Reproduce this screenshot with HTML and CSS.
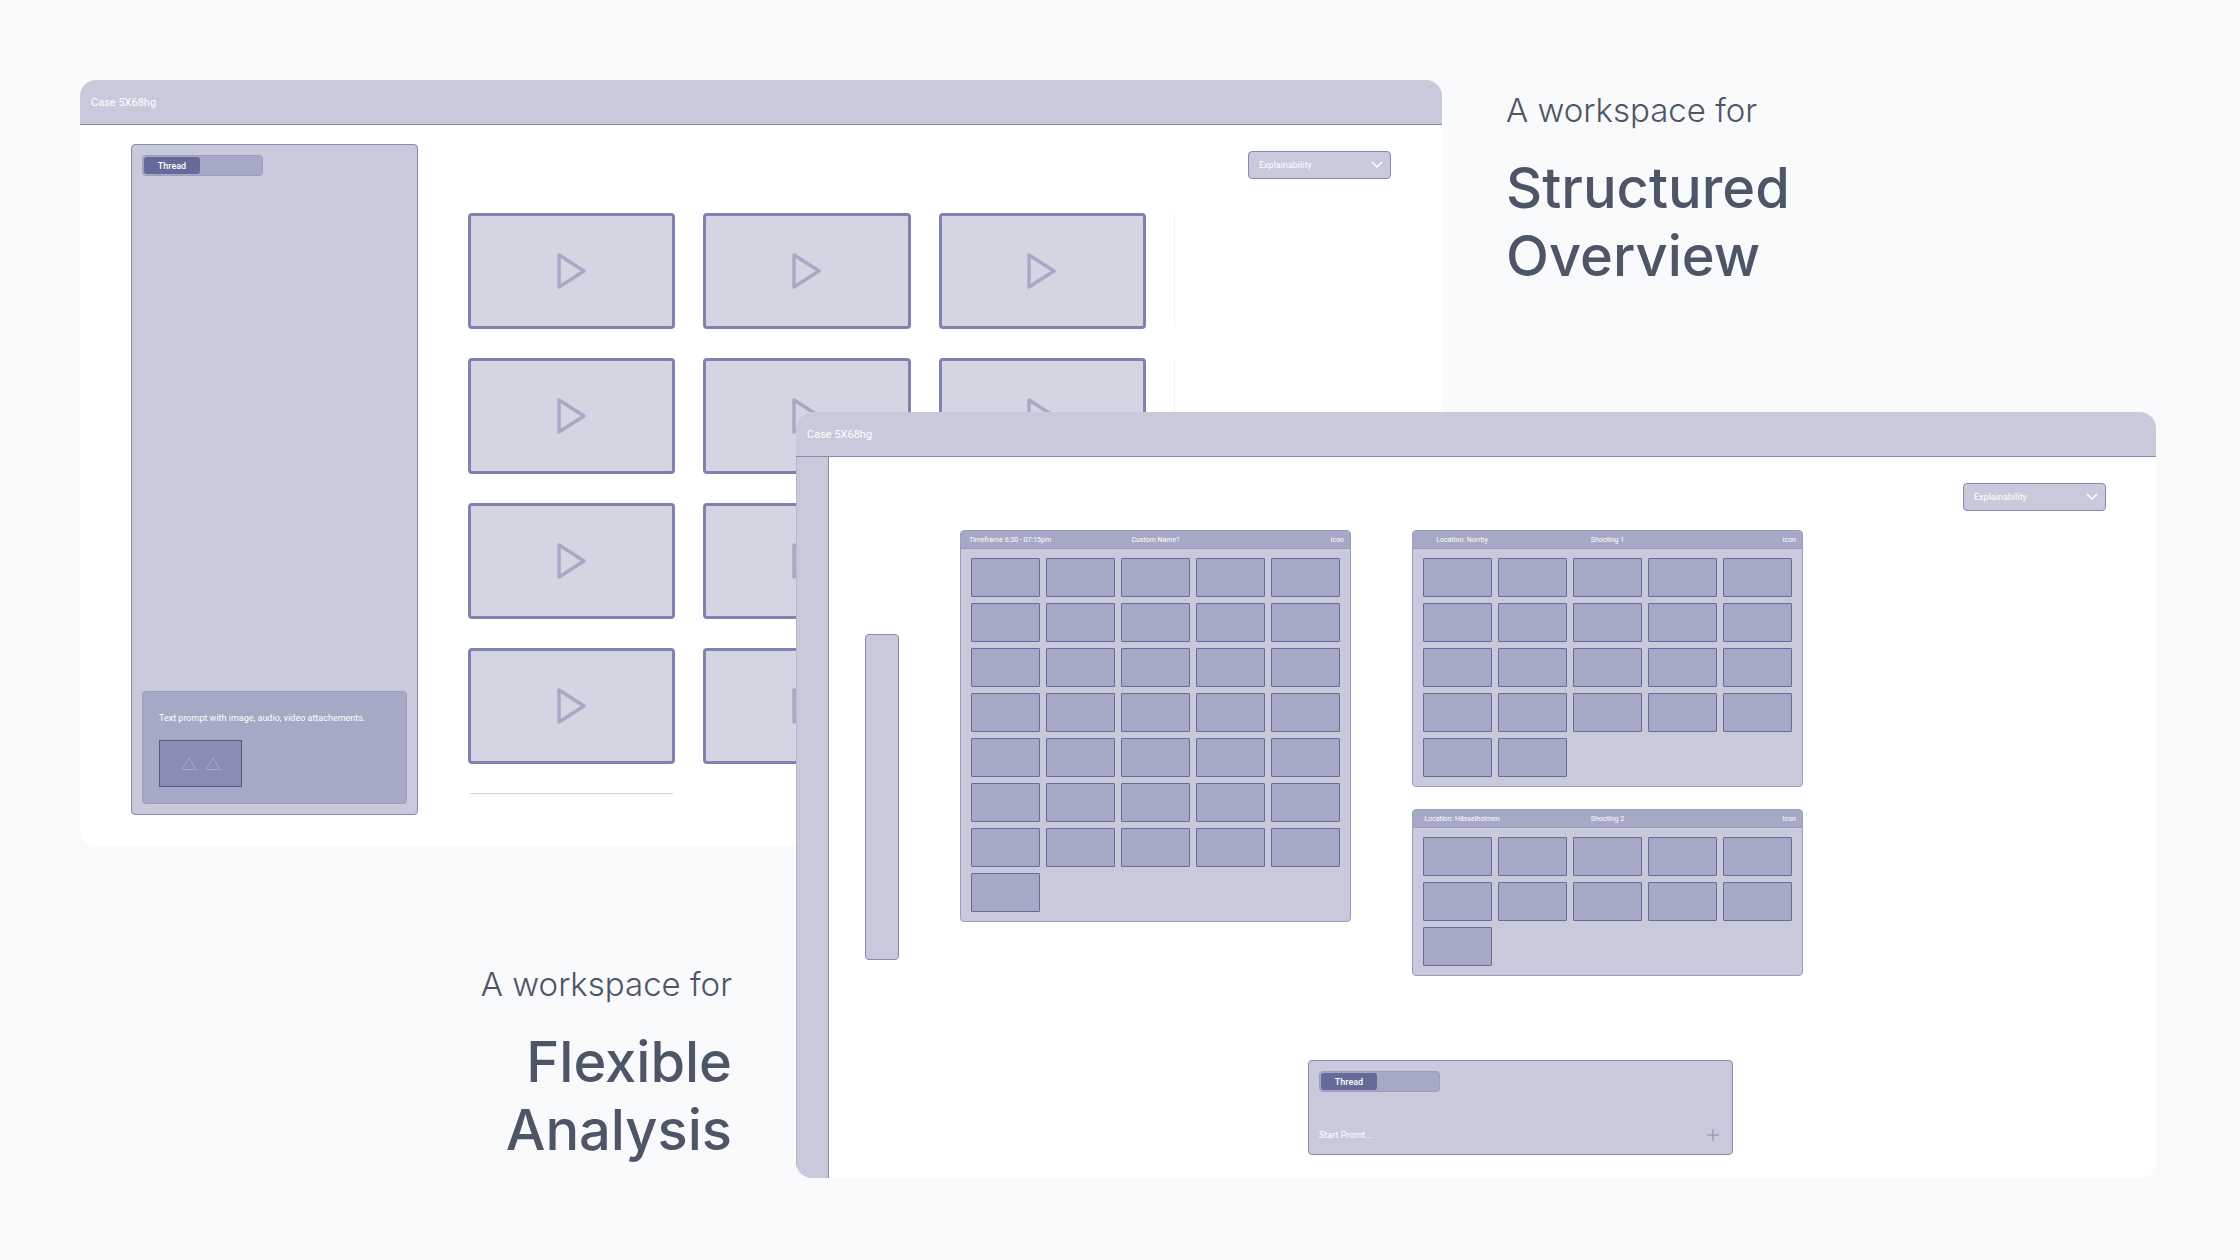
FILE: index.html
```html
<!DOCTYPE html>
<html lang="en">
<head>
<meta charset="utf-8">
<title>Case workspace</title>
<link rel="stylesheet" href="styles.css">
</head>
<body>
<svg class="defs" aria-hidden="true">
  <symbol id="play" viewBox="0 0 32 38"><path d="M3 3 V35 L28 19 Z"/></symbol>
  <symbol id="chevron" viewBox="0 0 12 8"><path d="M1 1 L6 6 L11 1"/></symbol>
  <symbol id="plus" viewBox="0 0 12 12"><path d="M6 0 V12 M0 6 H12"/></symbol>
  <symbol id="triangle" viewBox="0 0 16 14"><path d="M8 1 L15 12.500 H1 Z"/></symbol>
</svg>
<main class="stage">
  <section class="window window-overview">
    <header class="titlebar">Case 5X68hg</header>
    <div class="overview-body">
      <aside class="thread-panel">
        <div class="tabs">
          <button class="tab tab-active" type="button">Thread</button>
          <button class="tab" type="button" aria-label="Second tab"></button>
        </div>
        <div class="prompt-card">
          <p class="prompt-text">Text prompt with image, audio, video attachements.</p>
          <div class="attachment">
            <svg class="triangle"><use href="#triangle"/></svg>
            <svg class="triangle"><use href="#triangle"/></svg>
          </div>
        </div>
      </aside>
      <div class="overview-main">
        <div class="toolbar">
          <div class="dropdown">
            <select class="dropdown-field" aria-label="View mode"><option>Explainability</option></select>
            <svg class="dropdown-icon"><use href="#chevron"/></svg>
          </div>
        </div>
        <div class="gallery">
          <button class="video" type="button" aria-label="Play"><svg class="play"><use href="#play"/></svg></button>
          <button class="video" type="button" aria-label="Play"><svg class="play"><use href="#play"/></svg></button>
          <button class="video" type="button" aria-label="Play"><svg class="play"><use href="#play"/></svg></button>
          <div class="peek-side"></div>
          <button class="video" type="button" aria-label="Play"><svg class="play"><use href="#play"/></svg></button>
          <button class="video" type="button" aria-label="Play"><svg class="play"><use href="#play"/></svg></button>
          <button class="video" type="button" aria-label="Play"><svg class="play"><use href="#play"/></svg></button>
          <div class="peek-side"></div>
          <button class="video" type="button" aria-label="Play"><svg class="play"><use href="#play"/></svg></button>
          <button class="video" type="button" aria-label="Play"><svg class="play"><use href="#play"/></svg></button>
          <button class="video" type="button" aria-label="Play"><svg class="play"><use href="#play"/></svg></button>
          <div class="peek-side"></div>
          <button class="video" type="button" aria-label="Play"><svg class="play"><use href="#play"/></svg></button>
          <button class="video" type="button" aria-label="Play"><svg class="play"><use href="#play"/></svg></button>
          <button class="video" type="button" aria-label="Play"><svg class="play"><use href="#play"/></svg></button>
          <div class="peek-side"></div>
          <div class="peek-below"></div>
        </div>
      </div>
    </div>
  </section>

  <div class="intro intro-overview">
    <p class="intro-lead">A workspace for</p>
    <h2 class="intro-title">Structured<br>Overview</h2>
  </div>

  <div class="intro intro-analysis">
    <p class="intro-lead">A workspace for</p>
    <h2 class="intro-title">Flexible<br>Analysis</h2>
  </div>

  <section class="window window-analysis">
    <header class="titlebar">Case 5X68hg</header>
    <div class="analysis-body">
      <nav class="rail" aria-label="Sections"></nav>
      <div class="canvas">
        <div class="toolbar">
          <div class="dropdown">
            <select class="dropdown-field" aria-label="View mode"><option>Explainability</option></select>
            <svg class="dropdown-icon"><use href="#chevron"/></svg>
          </div>
        </div>
        <div class="board">
          <div class="palette"></div>
          <article class="group">
            <header class="group-head"><span>Timeframe 6:30 - 07:15pm</span><span>Custom Name?</span><span class="group-icon">Icon</span></header>
            <div class="cells">
              <i class="cell"></i><i class="cell"></i><i class="cell"></i><i class="cell"></i><i class="cell"></i>
              <i class="cell"></i><i class="cell"></i><i class="cell"></i><i class="cell"></i><i class="cell"></i>
              <i class="cell"></i><i class="cell"></i><i class="cell"></i><i class="cell"></i><i class="cell"></i>
              <i class="cell"></i><i class="cell"></i><i class="cell"></i><i class="cell"></i><i class="cell"></i>
              <i class="cell"></i><i class="cell"></i><i class="cell"></i><i class="cell"></i><i class="cell"></i>
              <i class="cell"></i><i class="cell"></i><i class="cell"></i><i class="cell"></i><i class="cell"></i>
              <i class="cell"></i><i class="cell"></i><i class="cell"></i><i class="cell"></i><i class="cell"></i>
              <i class="cell"></i>
            </div>
          </article>
          <div class="group-stack">
            <article class="group">
              <header class="group-head"><span>Location: Norrby</span><span>Shooting 1</span><span class="group-icon">Icon</span></header>
              <div class="cells">
                <i class="cell"></i><i class="cell"></i><i class="cell"></i><i class="cell"></i><i class="cell"></i>
                <i class="cell"></i><i class="cell"></i><i class="cell"></i><i class="cell"></i><i class="cell"></i>
                <i class="cell"></i><i class="cell"></i><i class="cell"></i><i class="cell"></i><i class="cell"></i>
                <i class="cell"></i><i class="cell"></i><i class="cell"></i><i class="cell"></i><i class="cell"></i>
                <i class="cell"></i><i class="cell"></i>
              </div>
            </article>
            <article class="group">
              <header class="group-head"><span>Location: Hässelholmen</span><span>Shooting 2</span><span class="group-icon">Icon</span></header>
              <div class="cells">
                <i class="cell"></i><i class="cell"></i><i class="cell"></i><i class="cell"></i><i class="cell"></i>
                <i class="cell"></i><i class="cell"></i><i class="cell"></i><i class="cell"></i><i class="cell"></i>
                <i class="cell"></i>
              </div>
            </article>
          </div>
        </div>
        <form class="composer">
          <div class="tabs">
            <button class="tab tab-active" type="button">Thread</button>
            <button class="tab" type="button" aria-label="Second tab"></button>
          </div>
          <div class="composer-row">
            <input class="composer-input" type="text" placeholder="Start Promt..." aria-label="Prompt">
            <button class="add" type="button" aria-label="Add attachment"><svg class="plus"><use href="#plus"/></svg></button>
          </div>
        </form>
      </div>
    </div>
  </section>
</main>
</body>
</html>
```
FILE: styles.css
```css
:root {
  --page: #f9fafc;
  --surface: #c8c9db;
  --tile: #d3d5e2;
  --mid: #a6a9c5;
  --line: #8689b4;
  --deep: #666a99;
  --ink: #4d5666;
}

* { box-sizing: border-box; }

body {
  margin: 0;
  background: var(--page);
  font-family: Roboto, "Liberation Sans", sans-serif;
  color: #fff;
}

button, input, select { font: inherit; color: inherit; }

p, h2 { margin: 0; }

.defs { display: none; }

/* Two overlapping windows share one grid; each caption fills a free corner. */
.stage {
  display: grid;
  grid-template-columns: 716fr 646fr 714fr;
  grid-template-rows: minmax(332px, auto) minmax(434px, auto) minmax(332px, auto);
  min-height: 100vh;
  align-content: start;
  padding: 80px 84px 80px 80px;
}

.window {
  display: flex;
  flex-direction: column;
  min-width: 0;
  background: #fff;
  border-radius: 16px;
  overflow: hidden;
}

.window-overview { grid-area: 1 / 1 / 3 / 3; }
.window-analysis { grid-area: 2 / 2 / 4 / 4; }

.titlebar {
  height: 45px;
  padding: 0 11px;
  background: var(--surface);
  border-bottom: 1px solid var(--line);
  font-size: 11px;
  line-height: 46px;
}

/* Captions */
.intro { color: var(--ink); font-family: Inter, "Liberation Sans", sans-serif; }

.intro-overview { grid-area: 1 / 3; padding: 8px 0 0 64px; }
.intro-analysis { grid-area: 3 / 1; padding: 116px 64px 0 0; text-align: right; }

.intro-lead {
  font-size: 33px;
  font-weight: 300;
  line-height: 44px;
}

.intro-title {
  margin-top: 22px;
  font-size: 56px;
  font-weight: 500;
  line-height: 68px;
}

/* Shared controls */
.toolbar { display: flex; justify-content: flex-end; }

.dropdown { position: relative; width: 143px; height: 28px; }

.dropdown-field {
  width: 100%;
  height: 100%;
  padding: 0 28px 0 10px;
  appearance: none;
  background: var(--surface);
  border: 1px solid var(--line);
  border-radius: 4px;
  font-size: 9px;
}

.dropdown-icon {
  position: absolute;
  top: 10px;
  right: 8px;
  width: 12px;
  height: 8px;
  fill: none;
  stroke: #fff;
  stroke-width: 1.500;
  pointer-events: none;
}

.tabs {
  display: flex;
  width: 121px;
  height: 21px;
  padding: 1px;
  background: var(--mid);
  border: 1px solid #999dbf;
  border-radius: 4px;
}

.tab {
  flex: 1;
  padding: 0;
  background: none;
  border: 0;
  border-radius: 3px;
  font-size: 9px;
  font-weight: 500;
}

.tab-active { flex: 0 0 56px; background: var(--deep); }

/* Overview window */
.overview-body {
  flex: 1;
  display: flex;
  gap: 50px;
  padding: 19px 51px 31px;
}

.thread-panel {
  flex: 0 0 287px;
  display: flex;
  flex-direction: column;
  justify-content: space-between;
  padding: 10px;
  background: var(--surface);
  border: 1px solid var(--line);
  border-radius: 4px;
}

.prompt-card {
  padding: 19px 16px 16px;
  background: var(--mid);
  border: 1px solid #999dbf;
  border-radius: 4px;
}

.prompt-text { font-size: 9px; line-height: 14px; white-space: nowrap; }

.attachment {
  display: flex;
  align-items: center;
  justify-content: center;
  gap: 8px;
  width: 83px;
  height: 47px;
  margin-top: 15px;
  background: #898cb4;
  border: 1px solid #555b80;
}

.triangle { width: 16px; height: 14px; fill: none; stroke: var(--mid); }

.overview-main { flex: 1; min-width: 0; padding-top: 7px; }

.gallery {
  display: grid;
  grid-template-columns: repeat(3, 1fr) 1px;
  grid-auto-rows: 116px;
  gap: 29px 28px;
  max-width: 707px;
  margin-top: 34px;
  max-height: 581px;
  overflow: hidden;
}

.video {
  display: flex;
  align-items: center;
  justify-content: center;
  padding: 0;
  background: var(--tile);
  border: 3px solid #7f82af;
  border-radius: 4px;
}

.play {
  width: 32px;
  height: 38px;
  fill: none;
  stroke: var(--mid);
  stroke-width: 3.500;
  stroke-linejoin: round;
}

.peek-side { margin: 2px 0; background: #f2f2f7; }
.peek-below { height: 1px; margin: 0 2px; background: #d0d0e0; }

/* Analysis window */
.analysis-body { flex: 1; display: flex; }

.rail {
  flex: 0 0 33px;
  background: var(--surface);
  border-left: 1px solid #b4b6cf;
  border-right: 1px solid var(--line);
}

.canvas { flex: 1; min-width: 0; padding: 26px 50px 23px 36px; }

.board {
  display: flex;
  align-items: flex-start;
  margin-top: 19px;
}

.palette {
  flex: 0 0 34px;
  height: 326px;
  margin: 104px 61px 0 0;
  background: var(--surface);
  border: 1px solid var(--line);
  border-radius: 4px;
}

.group {
  width: 391px;
  background: var(--surface);
  border: 1px solid #999dbf;
  border-radius: 4px;
  overflow: hidden;
}

.group-stack {
  display: flex;
  flex-direction: column;
  gap: 22px;
  margin-left: 61px;
}

.group-head {
  display: grid;
  grid-template-columns: 98px 1fr 98px;
  height: 18px;
  background: var(--mid);
  border-bottom: 1px solid #999dbf;
  font-size: 7px;
  line-height: 18px;
  text-align: center;
  white-space: nowrap;
}

.group-icon { padding-right: 6px; text-align: right; }

.cells {
  display: grid;
  grid-template-columns: repeat(5, 1fr);
  grid-auto-rows: 39px;
  gap: 6px;
  padding: 9px 10px;
}

.cell {
  background: var(--mid);
  border: 1px solid var(--deep);
  border-radius: 1px;
}

.composer {
  width: 425px;
  margin: 84px 0 0 443px;
  padding: 10px;
  background: var(--surface);
  border: 1px solid var(--line);
  border-radius: 4px;
}

.composer-row {
  display: flex;
  align-items: center;
  margin-top: 33px;
}

.composer-input {
  flex: 1;
  height: 19px;
  padding: 0;
  background: none;
  border: 0;
  font-size: 9px;
}

.composer-input::placeholder { color: #fff; opacity: 1; }

.add { display: flex; padding: 0 3px; background: none; border: 0; }

.plus { width: 12px; height: 12px; stroke: var(--line); }
```
